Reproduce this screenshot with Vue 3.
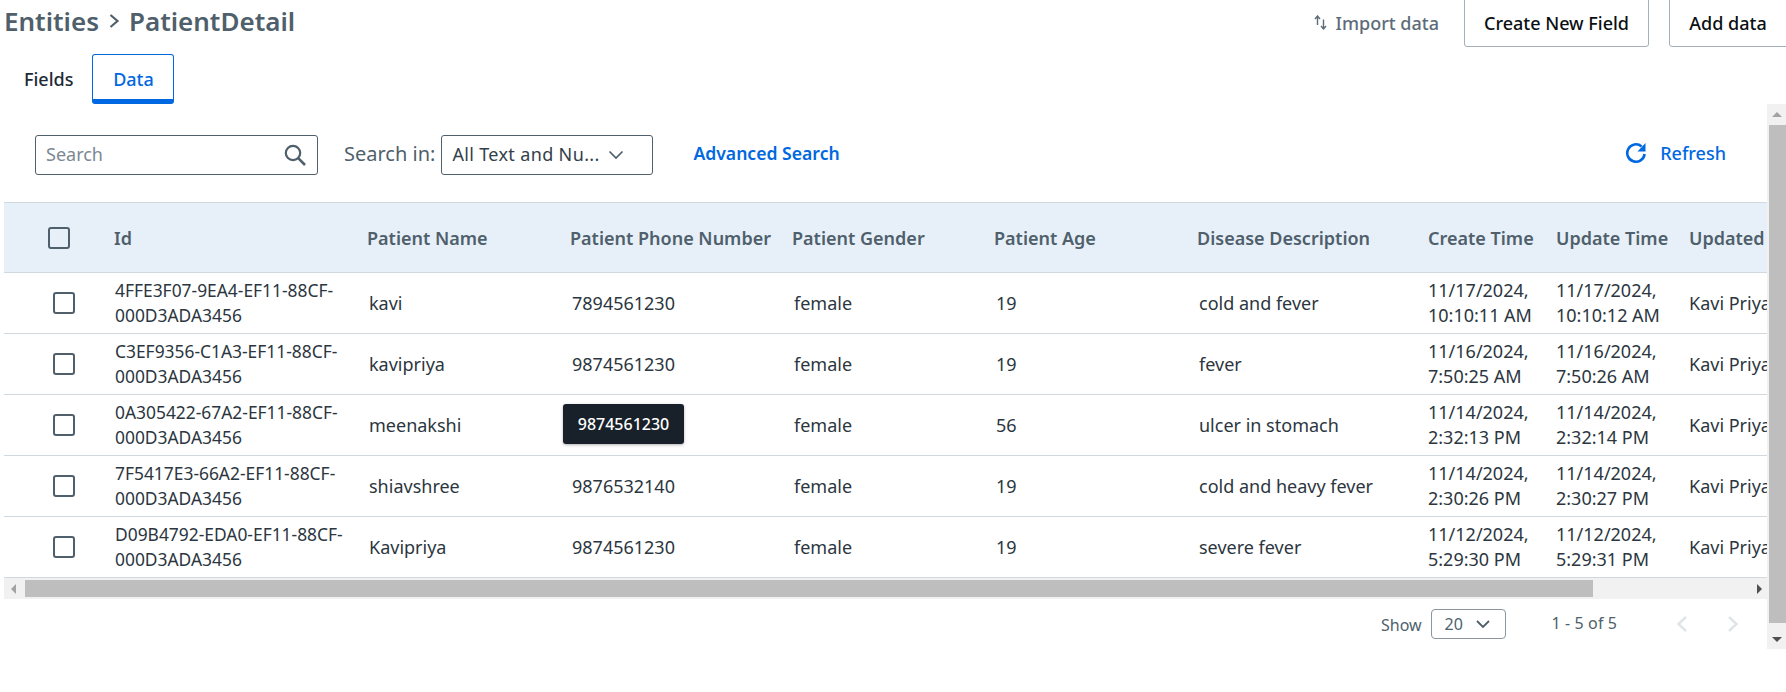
<script setup>
const rows = [
  { id: '4FFE3F07-9EA4-EF11-88CF-000D3ADA3456', name: 'kavi', phone: '7894561230', age: 19, desc: 'cold and fever', c: '11/17/2024, 10:10:11 AM', u: '11/17/2024, 10:10:12 AM' },
  { id: 'C3EF9356-C1A3-EF11-88CF-000D3ADA3456', name: 'kavipriya', phone: '9874561230', age: 19, desc: 'fever', c: '11/16/2024, 7:50:25 AM', u: '11/16/2024, 7:50:26 AM' },
  { id: '0A305422-67A2-EF11-88CF-000D3ADA3456', name: 'meenakshi', phone: '9874561230', age: 56, desc: 'ulcer in stomach', c: '11/14/2024, 2:32:13 PM', u: '11/14/2024, 2:32:14 PM', tip: true },
  { id: '7F5417E3-66A2-EF11-88CF-000D3ADA3456', name: 'shiavshree', phone: '9876532140', age: 19, desc: 'cold and heavy fever', c: '11/14/2024, 2:30:26 PM', u: '11/14/2024, 2:30:27 PM' },
  { id: 'D09B4792-EDA0-EF11-88CF-000D3ADA3456', name: 'Kavipriya', phone: '9874561230', age: 19, desc: 'severe fever', c: '11/12/2024, 5:29:30 PM', u: '11/12/2024, 5:29:31 PM' },
]
const heads = ['Id', 'Patient Name', 'Patient Phone Number', 'Patient Gender', 'Patient Age', 'Disease Description', 'Create Time', 'Update Time', 'Updated By']
const widths = [110, 253, 203, 222, 202, 203, 231, 128, 133, 200]
</script>

<template>
  <div class="page">
    <header class="top">
      <div class="crumb">
        <span>Entities</span>
        <svg class="crumb-sep" width="12" height="16" viewBox="0 0 12 16"><path d="M2.5 2 L9.5 8 L2.5 14" fill="none" stroke="#4f5f6b" stroke-width="2.2"/></svg>
        <span>PatientDetail</span>
      </div>
      <div class="actions">
        <button class="import">
          <svg width="13" height="15" viewBox="0 0 13 15"><path d="M3.5 10V1.5M1 4 L3.5 1 L6 4M9.5 4.5V13.5M7 11 L9.5 14 L12 11" fill="none" stroke="#5d6c78" stroke-width="1.4"/></svg>
          Import data
        </button>
        <button class="btn">Create New Field</button>
        <button class="btn add">Add data</button>
      </div>
    </header>

    <nav class="tabs">
      <span class="tab">Fields</span>
      <span class="tab active">Data</span>
    </nav>

    <section class="panel">
      <div class="main">
        <div class="toolbar">
          <div class="search">
            <span>Search</span>
            <svg width="24" height="24" viewBox="0 0 24 24"><circle cx="10" cy="10" r="7.2" fill="none" stroke="#4f5f6b" stroke-width="2.2"/><path d="M15.2 15.2 L22 22" stroke="#4f5f6b" stroke-width="2.6"/></svg>
          </div>
          <label class="search-label">Search in:</label>
          <div class="select">
            <span>All Text and Nu...</span>
            <svg width="16" height="10" viewBox="0 0 16 10"><path d="M1.5 1.5 L8 8 L14.5 1.5" fill="none" stroke="#4f5f6b" stroke-width="1.7"/></svg>
          </div>
          <a class="advanced">Advanced Search</a>
          <a class="refresh">
            <svg width="22" height="22" viewBox="0 0 22 22"><path d="M19.6 12 A8.7 8.7 0 1 1 16.6 4.4" fill="none" stroke="#0068e0" stroke-width="2.6"/><path d="M20.5 1 V9.5 H12.5 Z" fill="#0068e0"/></svg>
            Refresh
          </a>
        </div>

        <div class="table-wrap">
          <table>
            <colgroup>
              <col v-for="(w, i) in widths" :key="i" :style="{ width: w + 'px' }" />
            </colgroup>
            <thead>
              <tr>
                <th class="check-h"><span class="box"></span></th>
                <th v-for="h in heads" :key="h">{{ h }}</th>
              </tr>
            </thead>
            <tbody>
              <tr v-for="r in rows" :key="r.id">
                <td class="check-c"><span class="box"></span></td>
                <td class="pad id">{{ r.id }}</td>
                <td class="pad">{{ r.name }}</td>
                <td class="pad phone">
                  {{ r.phone }}
                  <span v-if="r.tip" class="tip">{{ r.phone }}</span>
                </td>
                <td class="pad">female</td>
                <td class="pad">{{ r.age }}</td>
                <td class="pad">{{ r.desc }}</td>
                <td>{{ r.c }}</td>
                <td>{{ r.u }}</td>
                <td>Kavi Priya</td>
              </tr>
            </tbody>
          </table>
        </div>

        <div class="hscroll">
          <span class="arrow-l"></span>
          <span class="hthumb"></span>
          <span class="arrow-r"></span>
        </div>

        <div class="pager">
          <span class="show">Show</span>
          <div class="size">
            <span>20</span>
            <svg width="14" height="9" viewBox="0 0 14 9"><path d="M1 1 L7 7 L13 1" fill="none" stroke="#4f5f6b" stroke-width="1.8"/></svg>
          </div>
          <span class="count">1 - 5 of 5</span>
          <svg class="nav" width="10" height="16" viewBox="0 0 10 16"><path d="M9 1 L1.5 8 L9 15" fill="none" stroke="#e0e4e7" stroke-width="2.4"/></svg>
          <svg class="nav nav-next" width="10" height="16" viewBox="0 0 10 16"><path d="M1 1 L8.5 8 L1 15" fill="none" stroke="#e0e4e7" stroke-width="2.4"/></svg>
        </div>
      </div>

      <div class="vscroll">
        <span class="arrow-u"></span>
        <span class="vthumb"></span>
        <span class="arrow-d"></span>
      </div>
    </section>
  </div>
</template>

<style>
html, body { margin: 0; overflow: hidden; background: #fff; }
</style>

<style scoped>
.page {
  width: 1786px;
  height: 692px;
  overflow: hidden;
  font-family: "Noto Sans", sans-serif;
  color: #212b36;
  background: #fff;
}
.top {
  height: 54px;
  display: flex;
  justify-content: space-between;
  padding-left: 4px;
}
.crumb {
  display: flex;
  align-items: center;
  height: 42px;
  gap: 9px;
  font-size: 26px;
  font-weight: 600;
  color: #4f5f6b;
}
.actions {
  display: flex;
  align-items: flex-end;
  height: 47px;
  margin-right: -13px;
}
.import {
  display: flex;
  align-items: center;
  gap: 9px;
  height: 45px;
  margin-bottom: 2px;
  margin-right: 25px;
  padding: 0;
  border: 0;
  background: none;
  font: 500 18px "Noto Sans", sans-serif;
  color: #5d6c78;
}
.btn {
  height: 60px;
  width: 185px;
  flex: none;
  padding: 12px 0 0;
  margin-right: 20px;
  border: 1px solid #a3b0ba;
  border-radius: 3px;
  background: #fff;
  font: 500 18px "Noto Sans", sans-serif;
  color: #0b0f13;
}
.btn.add { width: 130px; margin-right: 0; padding-right: 12px; }
.tabs {
  display: flex;
  height: 50px;
  padding-left: 24px;
}
.tab {
  display: flex;
  align-items: center;
  justify-content: center;
  font-size: 18px;
  font-weight: 500;
  color: #212b36;
  margin-right: 19px;
}
.tab.active {
  box-sizing: border-box;
  width: 82px;
  margin: 0;
  padding-top: 4px;
  color: #0068e0;
  border: 1.5px solid #0068e0;
  border-bottom-width: 5px;
  border-radius: 3px;
}
.panel { display: flex; height: 545px; }
.main { width: 1767px; flex: none; }
.toolbar {
  box-sizing: border-box;
  height: 98px;
  display: flex;
  align-items: flex-start;
  padding: 31px 0 0 35px;
  position: relative;
}
.search, .select {
  box-sizing: border-box;
  height: 40px;
  display: flex;
  align-items: center;
  justify-content: space-between;
  border: 1px solid #4f5f6b;
  border-radius: 3px;
  background: #fff;
}
.search span, .select span { position: relative; top: -1px; }
.search {
  width: 283px;
  padding: 0 10px;
  font-size: 18px;
  color: #7b8894;
}
.search-label {
  margin-left: 26px;
  margin-right: 6px;
  line-height: 38px;
  font-size: 20px;
  color: #4f5f6b;
}
.select {
  width: 212px;
  padding: 0 28px 0 10px;
  font-size: 18px;
  letter-spacing: 0.35px;
  color: #333f4a;
}
.advanced {
  margin-left: 40px;
  line-height: 37px;
  font-size: 17.6px;
  font-weight: 600;
  color: #0068e0;
}
.refresh {
  margin-left: auto;
  margin-right: 41px;
  display: flex;
  align-items: center;
  gap: 13px;
  height: 35px;
  font-size: 18px;
  font-weight: 500;
  color: #0068e0;
}
.table-wrap { margin-left: 4px; overflow: hidden; height: 376px; }
table {
  border-collapse: collapse;
  table-layout: fixed;
  width: 1885px;
}
thead tr {
  background: #e7f0f9;
  height: 70px;
}
th {
  padding: 0;
  text-align: left;
  font-size: 18px;
  font-weight: 600;
  color: #4f5f6b;
  white-space: nowrap;
  border-top: 1px solid #d0d9e0;
  border-bottom: 1px solid #d0d9e0;
}
td {
  height: 60px;
  padding: 0;
  font-size: 18px;
  line-height: 25px;
  color: #2c3640;
  border-bottom: 1px solid #d0d9e0;
}
td.pad { padding-left: 2px; }
td.id { padding-left: 1px; font-size: 17.4px; }
.phone { position: relative; }
.box {
  display: block;
  box-sizing: border-box;
  width: 22px;
  height: 22px;
  border: 2px solid #4f5f6b;
  border-radius: 3px;
}
.check-h .box { margin-left: 44px; }
.check-c .box { margin-left: 49px; }
.tip {
  position: absolute;
  left: -7px;
  top: 9px;
  width: 121px;
  height: 40px;
  display: flex;
  align-items: center;
  justify-content: center;
  background: #18212a;
  border-radius: 3px;
  box-shadow: 0 1px 3px rgba(0, 0, 0, 0.3);
  color: #fff;
  font-size: 16px;
  font-weight: 500;
}
.hscroll {
  height: 21px;
  margin-left: 4px;
  background: #f1f1f1;
  position: relative;
}
.hthumb {
  position: absolute;
  left: 21px;
  top: 2px;
  width: 1568px;
  height: 17px;
  background: #bebebe;
}
.arrow-l, .arrow-r, .arrow-u, .arrow-d { position: absolute; width: 0; height: 0; }
.arrow-l {
  left: 7px;
  top: 6px;
  border: 5px solid transparent;
  border-left: 0;
  border-right-color: #a3a3a3;
}
.arrow-r {
  right: 5px;
  top: 6px;
  border: 5px solid transparent;
  border-right: 0;
  border-left-color: #505050;
}
.pager {
  display: flex;
  align-items: center;
  justify-content: flex-end;
  height: 30px;
  margin-top: 10px;
  padding-right: 29px;
  font-size: 16px;
  color: #4f5f6b;
}
.show { margin-right: 9px; padding-top: 2px; }
.size {
  box-sizing: border-box;
  width: 75px;
  height: 30px;
  display: flex;
  align-items: center;
  justify-content: space-between;
  padding: 0 15px 0 13px;
  border: 1px solid #8a96a0;
  border-radius: 4px;
  font-size: 16px;
  margin-right: 46px;
}
.count { letter-spacing: 0.1px; margin-right: 60px; margin-bottom: 3px; }
.nav-next { margin-left: 41px; }
.vscroll {
  width: 19px;
  height: 545px;
  background: #f1f1f1;
  position: relative;
}
.vthumb {
  position: absolute;
  left: 2px;
  top: 21px;
  width: 17px;
  height: 498px;
  background: #bebebe;
}
.arrow-u {
  left: 5px;
  top: 8px;
  border: 5px solid transparent;
  border-top: 0;
  border-bottom-color: #a3a3a3;
}
.arrow-d {
  left: 5px;
  bottom: 7px;
  border: 5px solid transparent;
  border-bottom: 0;
  border-top-color: #505050;
}
</style>
